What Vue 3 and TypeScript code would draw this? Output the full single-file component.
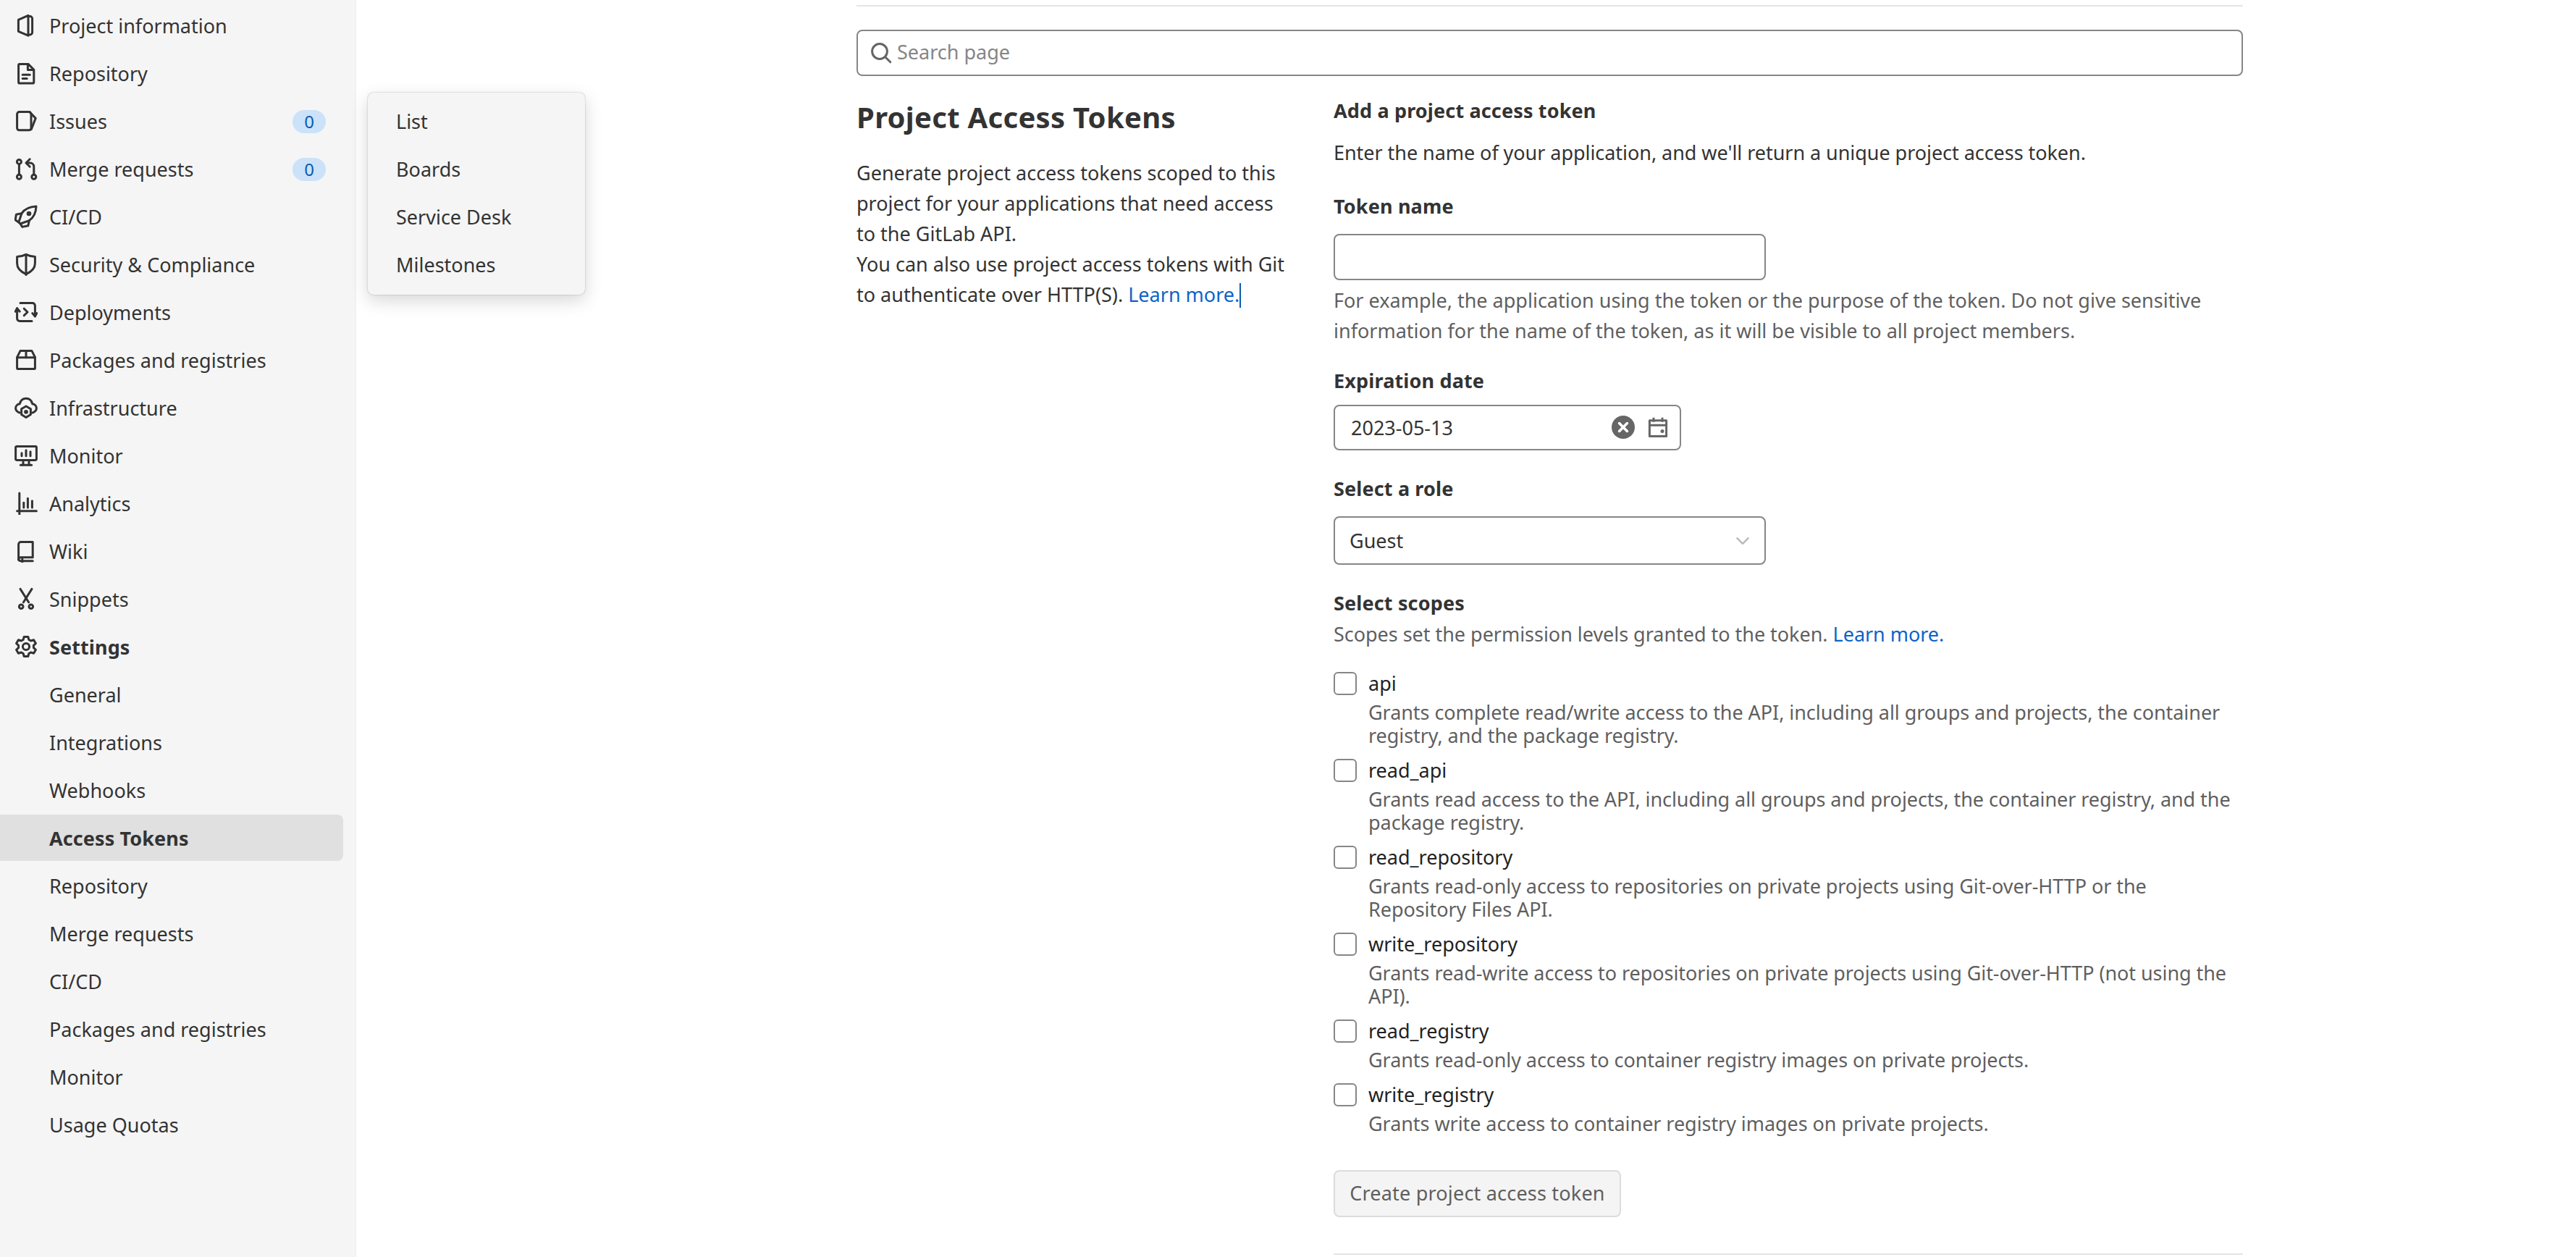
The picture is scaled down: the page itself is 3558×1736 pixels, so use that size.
<script setup lang="ts">
interface NavItem { label: string; icon?: string[]; dots?: number[][]; badge?: string; bold?: boolean; active?: boolean }

const nav: NavItem[] = [
  { label: 'Project information', icon: ['M2.7 4.2 9.5 1.2v13.9l-6.8-2.9z', 'M9.5 1.8h1.2a1.6 1.6 0 0 1 1.6 1.6v9.5a1.6 1.6 0 0 1-1.6 1.6H9.5'] },
  { label: 'Repository', icon: ['M9.5 1.7H3.6a.8.8 0 0 0-.8.8v11.7a.8.8 0 0 0 .8.8h9a.8.8 0 0 0 .8-.8V5.6z', 'M9.2 1.9v3.8h4', 'M5.6 9.1h5', 'M5.6 11.7h3'] },
  { label: 'Issues', badge: '0', icon: ['M10 1.8H3.3a1.5 1.5 0 0 0-1.5 1.5v9.6a1.5 1.5 0 0 0 1.5 1.5H10a1.5 1.5 0 0 0 1.5-1.5V3.3A1.5 1.5 0 0 0 10 1.8z', 'M10.6 2 14.6 6.2l-3 7.6'] },
  { label: 'Merge requests', badge: '0', icon: ['M3.2 5.2v6.6', 'M13.4 11.8V6.6a2.6 2.6 0 0 0-2.6-2.6H9', 'M10.6 1.4 8 4l2.6 2.6'], dots: [[3.2, 3.2, 1.5], [3.2, 13.6, 1.5], [13.4, 13.6, 1.5]] },
  { label: 'CI/CD', icon: ['M15 1c-4.6.2-7.8 1.6-10 4.8L2.9 12l1.1 1 6.2-2.2C13.4 8.6 14.8 5.4 15 1z', 'M5 5.8 1.2 6.6.6 10.4 2.9 12', 'M10.2 10.8 9.4 14.4 5.4 15.2 4 13'], dots: [[10, 6, 0.9]] },
  { label: 'Security & Compliance', icon: ['M8 1.2c2 1 4.4 1.6 6.2 1.6v4.6c0 3.4-2.6 5.8-6.2 7.4-3.6-1.6-6.2-4-6.2-7.4V2.8C3.6 2.8 6 2.2 8 1.2z', 'M8 1.4v13.8'] },
  { label: 'Deployments', icon: ['M4 1.8h8.4a1.8 1.8 0 0 1 1.8 1.8v7', 'M12 14.2H3.6a1.8 1.8 0 0 1-1.8-1.8v-7', 'M.6 7.6 1.8 5.4 3.6 7.6', 'M15.4 8.8l-1.2 2.2-1.8-2.2', 'M6.6 5.6 9 8l-2.4 2.4'] },
  { label: 'Packages and registries', icon: ['M1.8 6.2v7.6a.5.5 0 0 0 .5.5h11.4a.5.5 0 0 0 .5-.5V6.2L12 1.8H4z', 'M1.8 6.4h12.4', 'M8 1.8v4.6'] },
  { label: 'Infrastructure', icon: ['M3.5 11.5C2 11 .8 9.8.8 8.4c0-1.6 1.2-2.8 2.8-3C4.2 3 6 1.6 8 1.6s3.8 1.4 4.4 3.8c1.6.2 2.8 1.4 2.8 3 0 1.4-1.2 2.6-2.7 3.1', 'M8 7l3.2 1.9v3.9L8 14.8l-3.2-2V8.9z'], dots: [[8, 10.9, 0.7]] },
  { label: 'Monitor', icon: ['M1.4 1.8h13.2a.6.6 0 0 1 .6.6v8.2a.6.6 0 0 1-.6.6H1.4a.6.6 0 0 1-.6-.6V2.4a.6.6 0 0 1 .6-.6z', 'M4.2 14.6h7.6', 'M6 11.4v3', 'M10 11.4v3', 'M5 6.4v2', 'M8 4.4v4', 'M11 5.4v3'] },
  { label: 'Analytics', icon: ['M3.4 1v14.8', 'M1.8 13.4h13.4', 'M6.4 7.6v3.4', 'M9.2 4.6v6.4', 'M12.2 6.4v4.6'] },
  { label: 'Wiki', icon: ['M4.4 1.8h8.2v10.6H4.4a1.6 1.6 0 0 0-1.6 1.6V3.4a1.6 1.6 0 0 1 1.6-1.6z', 'M2.8 13.6a1.6 1.6 0 0 0 1.6 1.3h8.2', 'M5.4 13.4v3'] },
  { label: 'Snippets', icon: ['M4 1.2 9.8 10.4', 'M12 1.2 6.2 10.4'], dots: [[4.6, 13.4, 1.4], [11.4, 13.4, 1.4]] },
  { label: 'Settings', bold: true, icon: ['M6.6 1.2h2.8l.5 2 1.4.8 2-.6 1.4 2.4-1.5 1.4v1.6l1.5 1.4-1.4 2.4-2-.6-1.4.8-.5 2H6.6l-.5-2-1.4-.8-2 .6-1.4-2.4 1.5-1.4V7.2L1.3 5.8l1.4-2.4 2 .6 1.4-.8z'], dots: [[8, 8, 2.3]] },
  { label: 'General' },
  { label: 'Integrations' },
  { label: 'Webhooks' },
  { label: 'Access Tokens', bold: true, active: true },
  { label: 'Repository' },
  { label: 'Merge requests' },
  { label: 'CI/CD' },
  { label: 'Packages and registries' },
  { label: 'Monitor' },
  { label: 'Usage Quotas' },
]

const flyout = ['List', 'Boards', 'Service Desk', 'Milestones']

interface Scope { name: string; lines: string[] }
const scopes: Scope[] = [
  { name: 'api', lines: ['Grants complete read/write access to the API, including all groups and projects, the container', 'registry, and the package registry.'] },
  { name: 'read_api', lines: ['Grants read access to the API, including all groups and projects, the container registry, and the', 'package registry.'] },
  { name: 'read_repository', lines: ['Grants read-only access to repositories on private projects using Git-over-HTTP or the', 'Repository Files API.'] },
  { name: 'write_repository', lines: ['Grants read-write access to repositories on private projects using Git-over-HTTP (not using the', 'API).'] },
  { name: 'read_registry', lines: ['Grants read-only access to container registry images on private projects.'] },
  { name: 'write_registry', lines: ['Grants write access to container registry images on private projects.'] },
]
</script>

<template>
  <div class="page">
    <aside class="sidebar">
      <div v-for="(item, i) in nav" :key="i" class="nav-row" :class="{ active: item.active, bold: item.bold }">
        <span class="nav-icon">
          <svg v-if="item.icon" viewBox="0 0 16 16" width="32" height="32" fill="none" stroke="#333" stroke-width="1.5" stroke-linejoin="round" stroke-linecap="round">
            <path v-for="(d, j) in item.icon" :key="j" :d="d" />
            <circle v-for="(c, j) in item.dots || []" :key="'c' + j" :cx="c[0]" :cy="c[1]" :r="c[2]" />
          </svg>
        </span>
        <span class="nav-label">{{ item.label }}</span>
        <span v-if="item.badge" class="badge">{{ item.badge }}</span>
      </div>
    </aside>

    <div class="flyout">
      <div v-for="f in flyout" :key="f" class="fly-item">{{ f }}</div>
    </div>

    <main class="content">
      <hr class="rule" />
      <div class="search">
        <svg viewBox="0 0 16 16" width="32" height="32" fill="none" stroke="#666" stroke-width="1.5" stroke-linecap="round">
          <circle cx="7" cy="7" r="5.2" />
          <path d="M11 11l3.4 3.4" />
        </svg>
        <input class="search-input" type="text" placeholder="Search page" />
      </div>

      <div class="columns">
        <section class="intro">
          <h2 class="title">Project Access Tokens</h2>
          <p class="intro-text">Generate project access tokens scoped to this<br />project for your applications that need access<br />to the GitLab API.<br />You can also use project access tokens with Git<br />to authenticate over HTTP(S). <a class="link">Learn more.</a><span class="caret"></span></p>
        </section>

        <form class="form" @submit.prevent>
          <div class="label first">Add a project access token</div>
          <p class="lead">Enter the name of your application, and we'll return a unique project access token.</p>

          <div class="label token-label">Token name</div>
          <input class="field token-field" type="text" />
          <p class="help">For example, the application using the token or the purpose of the token. Do not give sensitive information for the name of the token, as it will be visible to all project members.</p>

          <div class="label exp-label">Expiration date</div>
          <div class="field date-field">
            <span class="date-value">2023-05-13</span>
            <svg class="clear" viewBox="0 0 16 16" width="32" height="32">
              <circle cx="8" cy="8" r="8" fill="#666" />
              <path d="M5.3 5.3l5.4 5.4M10.7 5.3l-5.4 5.4" stroke="#fff" stroke-width="1.8" stroke-linecap="round" />
            </svg>
            <svg viewBox="0 0 16 16" width="32" height="32" fill="none" stroke="#666" stroke-width="1.5">
              <path d="M2.2 3.4h11.6v10.8H2.2z" stroke-linejoin="round" />
              <path d="M2.2 6.6h11.6M5 1.4v3M11 1.4v3" />
              <circle cx="11" cy="10.8" r=".5" fill="#666" />
            </svg>
          </div>

          <div class="label role-label">Select a role</div>
          <div class="field select-field">
            <span>Guest</span>
            <svg viewBox="0 0 16 16" width="24" height="24" fill="none" stroke="#bbb" stroke-width="1.8" stroke-linecap="round" stroke-linejoin="round">
              <path d="M3 5.6l5 5 5-5" />
            </svg>
          </div>

          <div class="label scope-label">Select scopes</div>
          <p class="muted scope-desc">Scopes set the permission levels granted to the token. <a class="link">Learn more.</a></p>

          <div class="scopes">
            <label v-for="s in scopes" :key="s.name" class="scope">
              <span class="box"></span>
              <span class="scope-body">
                <span class="scope-name">{{ s.name }}</span>
                <span v-for="l in s.lines" :key="l" class="scope-line">{{ l }}</span>
              </span>
            </label>
          </div>

          <button class="submit" type="button">Create project access token</button>
          <hr class="rule bottom" />
        </form>
      </div>
    </main>
  </div>
</template>

<style>
html, body { margin: 0; height: 100%; overflow: hidden; background: #fff; }
</style>

<style scoped>
.page {
  position: relative;
  display: flex;
  height: 1736px;
  overflow: hidden;
  font-family: "Noto Sans", sans-serif;
  font-size: 27px;
  letter-spacing: 0;
  color: #333;
}
.sidebar {
  box-sizing: border-box;
  flex: 0 0 492px;
  padding-top: 3px;
  background: #f5f5f5;
  border-right: 1px solid #eee;
}
.nav-row {
  box-sizing: border-box;
  display: flex;
  align-items: center;
  height: 64px;
  margin: 0 17px 2px 0;
  padding-left: 20px;
  border-radius: 0 8px 8px 0;
}
.nav-row.active { background: #e0e0e0; }
.nav-row.bold { font-weight: 700; letter-spacing: 0.1px; }
.nav-icon { flex: 0 0 32px; height: 32px; margin-right: 16px; }
.nav-label { flex: 1; white-space: nowrap; }
.badge {
  width: 46px;
  height: 32px;
  margin: 2px 24px 0 0;
  border-radius: 16px;
  background: #cbe2f9;
  color: #0b5cad;
  font-size: 24px;
  line-height: 32px;
  text-align: center;
}
.flyout {
  position: absolute;
  left: 508px;
  top: 128px;
  box-sizing: border-box;
  width: 300px;
  height: 279px;
  padding: 7px 0;
  border-radius: 8px;
  background: #f5f5f5;
  box-shadow: 0 0 2px rgba(0, 0, 0, 0.3), 0 8px 24px rgba(0, 0, 0, 0.16);
}
.fly-item { height: 66px; line-height: 66px; padding-left: 39px; }
.content { box-sizing: border-box; width: 1915px; margin-left: 691px; }
.rule { margin: 0; border: 0; height: 2px; background: #e4e4e4; }
.content > .rule { margin-top: 7px; }
.search {
  box-sizing: border-box;
  display: flex;
  align-items: center;
  height: 64px;
  margin-top: 32px;
  padding: 0 16px;
  border: 2px solid #868686;
  border-radius: 8px;
}
.search-input {
  flex: 1;
  margin-left: 6px;
  border: 0;
  outline: 0;
  padding: 0 0 3px;
  font: inherit;
  letter-spacing: inherit;
  background: transparent;
}
.search-input::placeholder { color: #868686; opacity: 1; }
.columns { display: grid; grid-template-columns: 659px 1256px; }
.title { margin: 28px 0 0; font-size: 40px; line-height: 58px; font-weight: 700; letter-spacing: 0.3px; }
.intro-text { margin: 27px 0 0; line-height: 42px; white-space: nowrap; }
.link { color: #0b64c8; }
.caret { display: inline-block; width: 0; height: 34px; border-left: 2px solid #0b5cad; vertical-align: -8px; }
.form { display: block; }
.label { font-weight: 700; line-height: 42px; letter-spacing: 0.15px; }
.first { margin-top: 27px; }
.lead { margin: 16px 0 0; line-height: 42px; letter-spacing: -0.05px; }
.token-label { margin-top: 32px; }
.field {
  box-sizing: border-box;
  display: flex;
  align-items: center;
  border: 2px solid #868686;
  border-radius: 8px;
  font: inherit;
  background: #fff;
}
.token-field { width: 597px; height: 64px; margin-top: 17px; }
.help { width: 1220px; margin: 7px 0 0; line-height: 42px; color: #5f5f5f; }
.exp-label { margin-top: 27px; }
.date-field { width: 480px; height: 63px; margin-top: 12px; padding: 0 14px 1px 22px; }
.date-value { flex: 1; }
.clear { margin-right: 16px; }
.role-label { margin-top: 32px; }
.select-field { width: 597px; height: 67px; margin-top: 17px; padding: 0 18px 0 20px; justify-content: space-between; }
.scope-label { margin-top: 32px; }
.muted { color: #5f5f5f; }
.scope-desc { margin: 1px 0 0; line-height: 42px; letter-spacing: -0.03px; }
.scopes { margin-top: 31px; }
.scope { display: flex; }
.box {
  box-sizing: border-box;
  flex: 0 0 32px;
  height: 32px;
  margin-right: 16px;
  border: 2px solid #868686;
  border-radius: 6px;
  background: #fff;
}
.scope-body { display: flex; flex-direction: column; padding-bottom: 16px; }
.scope-name { line-height: 32px; margin-bottom: 8px; color: #222; }
.scope-line { line-height: 32px; color: #5f5f5f; white-space: nowrap; letter-spacing: -0.06px; }
.submit {
  display: block;
  box-sizing: border-box;
  width: 397px;
  height: 65px;
  margin-top: 32px;
  padding: 0 0 2px;
  border: 2px solid #dcdcdc;
  border-radius: 8px;
  background: #f4f4f4;
  color: #5f5f5f;
  font: inherit;
  letter-spacing: 0.2px;
}
.rule.bottom { margin-top: 50px; }
</style>
